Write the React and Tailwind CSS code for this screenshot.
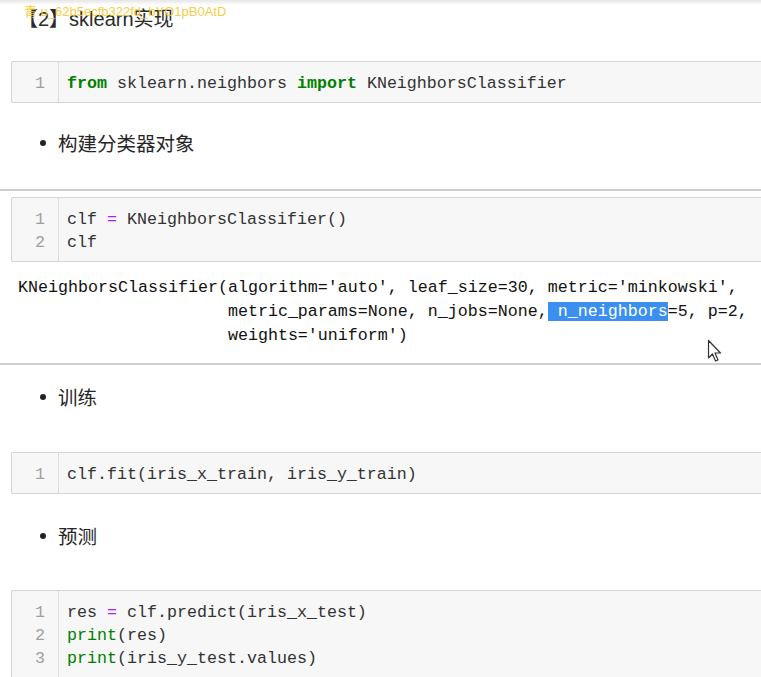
import React from "react";

const mono = { fontFamily: '"Liberation Mono", "Noto Sans CJK SC", monospace' };

function Tok({ t }) {
  if (t.k === "kw") return <span className="font-bold text-[#008000]">{t.s}</span>;
  if (t.k === "bi") return <span className="text-[#008000]">{t.s}</span>;
  if (t.k === "op") return <span className="text-[#aa22ff]">{t.s}</span>;
  return <span>{t.s}</span>;
}

function CodeCell({ lines, className = "" }) {
  return (
    <div className={`ml-[11px] flex border border-r-0 border-[#d4d4d4] bg-[#f7f7f7] rounded-l-[2px] ${className}`}>
      <div className="w-[47px] shrink-0 border-r border-[#dcdcdc] pt-[10px] pb-[7px] pr-[13px] text-right text-[#a0a0a0]" style={mono}>
        {lines.map((_, i) => (
          <div key={i} className="text-[16.67px] leading-[23px]">{i + 1}</div>
        ))}
      </div>
      <div className="flex-1 pt-[10px] pb-[7px] pl-[8px] text-[#333] whitespace-pre" style={mono}>
        {lines.map((l, i) => (
          <div key={i} className="text-[16.67px] leading-[23px]">
            {l.map((t, j) => <Tok key={j} t={t} />)}
          </div>
        ))}
      </div>
    </div>
  );
}

function Bullet({ children, className = "" }) {
  return (
    <div className={`flex items-center pl-[40px] h-[26px] ${className}`}>
      <span className="w-[6px] h-[6px] rounded-full bg-[#222] mr-[12px]" />
      <span className="text-[19.5px] text-[#262626]" style={{ fontFamily: '"Noto Sans CJK SC", "Liberation Sans", sans-serif' }}>
        {children}
      </span>
    </div>
  );
}

export default function App() {
  return (
    <div className="relative w-[761px] h-[677px] overflow-hidden bg-white">
      <div className="h-[5px] bg-gradient-to-b from-[#e6e6e6] to-white" />

      <div
        className="mt-[4px] pl-[18px] text-[20px] leading-[20px] text-[#2b2b2b]"
        style={{ fontFamily: '"Liberation Sans", "Noto Sans CJK SC", sans-serif' }}
      >
        【2】sklearn实现
      </div>

      <div
        className="absolute left-[24px] top-[4px] text-[13px] leading-[16px] text-[#f5c62a]/90"
        style={{ fontFamily: '"Liberation Sans", "Noto Sans CJK SC", sans-serif' }}
      >
        青 u_62b5ecfb322fd_bYO1pB0AtD
      </div>

      <CodeCell
        className="mt-[32px]"
        lines={[[{ k: "kw", s: "from" }, { s: " sklearn.neighbors " }, { k: "kw", s: "import" }, { s: " KNeighborsClassifier" }]]}
      />

      <Bullet className="mt-[27px]">构建分类器对象</Bullet>

      <div className="relative mt-[33px] border-y-2 border-[#cfcfcf] pt-[6px] pb-[15px]">
        <CodeCell
          lines={[
            [{ s: "clf " }, { k: "op", s: "=" }, { s: " KNeighborsClassifier()" }],
            [{ s: "clf" }],
          ]}
        />
        <div className="mt-[14px] pl-[18px] text-[16.67px] leading-[24px] text-[#111] whitespace-pre" style={mono}>
          <div>KNeighborsClassifier(algorithm='auto', leaf_size=30, metric='minkowski',</div>
          <div>
            {"                     metric_params=None, n_jobs=None,"}
            <span className="bg-[#3b8ff0] text-white"> n_neighbors</span>
            {"=5, p=2,"}
          </div>
          <div>{"                     weights='uniform')"}</div>
        </div>
        <svg className="absolute left-[707px] top-[148px]" width="18" height="24" viewBox="0 0 18 24">
          <path d="M1.5 1.5 L1.5 19 L5.5 15 L8.5 22 L11 21 L8 14 L13.5 14 Z" fill="white" stroke="#333" strokeWidth="1.2" strokeLinejoin="round" />
        </svg>
      </div>

      <Bullet className="mt-[19px]">训练</Bullet>

      <CodeCell
        className="mt-[42px]"
        lines={[[{ s: "clf.fit(iris_x_train, iris_y_train)" }]]}
      />

      <Bullet className="mt-[29px]">预测</Bullet>

      <CodeCell
        className="mt-[41px]"
        lines={[
          [{ s: "res " }, { k: "op", s: "=" }, { s: " clf.predict(iris_x_test)" }],
          [{ k: "bi", s: "print" }, { s: "(res)" }],
          [{ k: "bi", s: "print" }, { s: "(iris_y_test.values)" }],
        ]}
      />
    </div>
  );
}
